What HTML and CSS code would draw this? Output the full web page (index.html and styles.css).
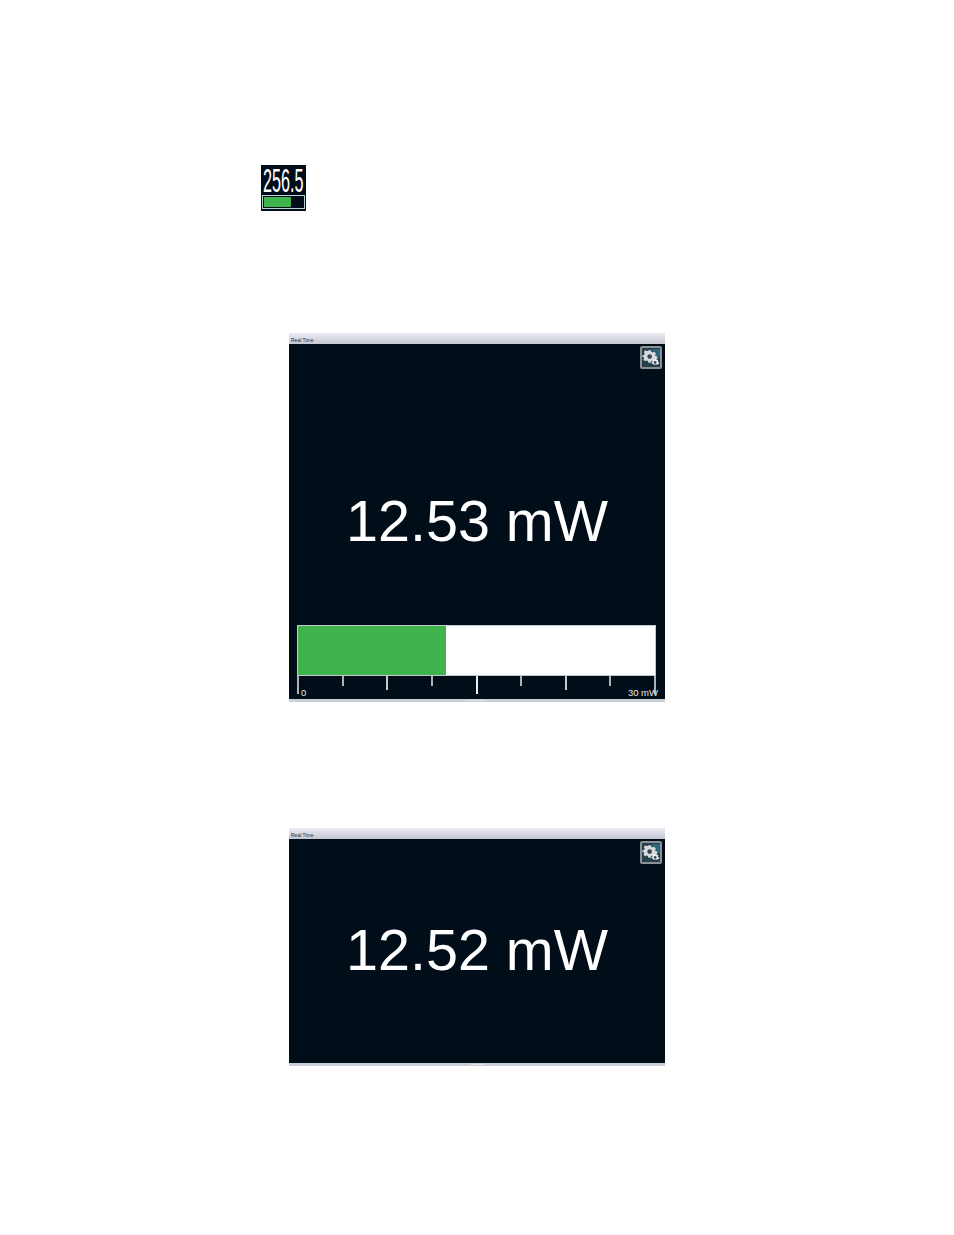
FILE: index.html
```html
<!DOCTYPE html>
<html lang="en">
<head>
    <meta charset="UTF-8">
    <meta name="viewport" content="width=device-width, initial-scale=1.0">
    <title>Real Time</title>
    <link rel="stylesheet" href="styles.css">
</head>
<body>
    <!-- Gear icon, used by both windows -->
    <svg class="icon-defs" width="0" height="0">
        <symbol id="gears" viewBox="0 0 20 19">
            <rect width="20" height="19" fill="#26404d"/>
            <rect x="11" y="0" width="9" height="10" fill="#2a6678"/>
            <path d="M7 1.5h3l.4 1.8 1.5.7 1.6-1 2 2-1 1.6.7 1.5 1.8.4v2.5l-1.8.4-.7 1.5-1.6.7-1.6-.7-1.4 1-.4 1.3H7l-.4-1.8-1.5-.7-1.6 1-2-2 1-1.6-.7-1.5L.5 9.5V7l1.8-.4.7-1.5-1-1.6 2-2 1.6 1 1.5-.7z" fill="#d8dbdd"/>
            <circle cx="8.5" cy="8.5" r="2.6" fill="#3a454d"/>
            <path d="M14.5 11l1.2.1.4 1 1.1-.3.9 1-.6 1 .5 1 1 .3v1.3l-1 .3-.4.6h-5.6l.3-.6-.8-.9-1 .3v-1.6l1-.3.5-1-.5-1 .9-.9 1 .4z" fill="#eceeef"/>
            <circle cx="14.6" cy="15" r="1.5" fill="#3a444b"/>
        </symbol>
    </svg>

    <!-- Small tile -->
    <div class="tile">
        <div class="tile-value"><span>256.5</span></div>
        <div class="tile-bar"><div class="tile-fill"></div></div>
    </div>

    <!-- Window with bar -->
    <div class="window window-bar">
        <div class="titlebar">Real Time</div>
        <div class="content">
            <button class="gear-btn"><svg width="18" height="19"><use href="#gears"/></svg></button>
            <div class="reading reading-top">12.53 mW</div>
            <div class="meter">
                <div class="meter-fill"></div>
            </div>
            <div class="scale">
                <span class="tick tick-long"></span>
                <span class="tick"></span>
                <span class="tick tick-mid"></span>
                <span class="tick"></span>
                <span class="tick tick-long tick-center"></span>
                <span class="tick"></span>
                <span class="tick tick-mid"></span>
                <span class="tick"></span>
                <span class="tick tick-long"></span>
                <span class="scale-min">0</span>
                <span class="scale-max">30 mW</span>
            </div>
        </div>
        <div class="bottombar"><span class="grip"></span></div>
    </div>

    <!-- Window without bar -->
    <div class="window window-plain">
        <div class="titlebar">Real Time</div>
        <div class="content">
            <button class="gear-btn"><svg width="18" height="19"><use href="#gears"/></svg></button>
            <div class="reading reading-plain">12.52 mW</div>
        </div>
        <div class="bottombar"><span class="grip"></span></div>
    </div>
</body>
</html>
```

FILE: styles.css
```css
body {
    font-family: "Liberation Sans", Arial, sans-serif;
    margin: 0;
    padding: 165px 0 0 0;
    background-color: #ffffff;
}
.icon-defs {
    display: block;
    height: 0;
}

/* Small tile */
.tile {
    width: 45px;
    height: 46px;
    margin-left: 261px;
    background-color: #020d1a;
    box-sizing: border-box;
    padding-top: 1px;
}
.tile-value {
    color: #ffffff;
    font-size: 33px;
    line-height: 29px;
    height: 29px;
    display: flex;
    justify-content: center;
    white-space: nowrap;
}
.tile-value span {
    display: block;
    flex: none;
    transform: scaleX(0.49);
}
.tile-bar {
    width: 43px;
    height: 14px;
    margin-left: 1px;
    box-sizing: border-box;
    border: 1px solid #b9d0da;
    padding: 1px;
    display: flex;
}
.tile-fill {
    width: 27px;
    background-color: #40b44c;
}

/* Windows */
.window {
    width: 376px;
    margin-left: 289px;
    display: flex;
    flex-direction: column;
}
.window-bar {
    height: 369px;
    margin-top: 122px;
}
.window-plain {
    height: 238px;
    margin-top: 126px;
}
.titlebar {
    height: 11px;
    flex: none;
    box-sizing: border-box;
    padding: 3px 0 0 2px;
    font-size: 5px;
    line-height: 8px;
    color: #2f3136;
    background: linear-gradient(#ebebf3, #c4c7d1);
}
.content {
    flex: 1;
    position: relative;
    background-color: #020d1a;
    display: flex;
    flex-direction: column;
}
.bottombar {
    height: 3px;
    flex: none;
    background-color: #c9d0da;
    display: flex;
    justify-content: center;
    align-items: center;
}
.grip {
    width: 15px;
    border-top: 1px dotted #f2f4f6;
}
.gear-btn {
    position: absolute;
    top: 2px;
    right: 3px;
    width: 22px;
    height: 23px;
    padding: 0;
    box-sizing: border-box;
    border: 2px solid #8b9094;
    border-radius: 2px;
    background-color: #26404d;
    overflow: hidden;
    display: flex;
    align-items: center;
    justify-content: center;
}
.reading {
    display: flex;
    align-items: center;
    justify-content: center;
    color: #ffffff;
    font-size: 57.5px;
}
.reading-top {
    height: 281px;
    box-sizing: border-box;
    padding-top: 72px;
}
.reading-plain {
    flex: 1;
    padding-bottom: 2px;
}

/* Meter */
.meter {
    width: 359px;
    height: 51px;
    margin-left: 8px;
    box-sizing: border-box;
    border: 1px solid #c4c8cc;
    background-color: #ffffff;
    display: flex;
}
.meter-fill {
    width: 148px;
    background-color: #40b44c;
}
.scale {
    position: relative;
    width: 359px;
    height: 20px;
    margin-left: 8px;
    display: flex;
    justify-content: space-between;
    align-items: flex-start;
}
.tick {
    width: 2px;
    height: 10px;
    background-color: #aeb2b5;
}
.tick-mid {
    height: 14px;
    background-color: #c6cacc;
}
.tick-long {
    height: 18px;
}
.tick-center {
    background-color: #eceeef;
}
.scale-min,
.scale-max {
    position: absolute;
    top: 11px;
    font-size: 9.5px;
    line-height: 11px;
    color: #e8e8e8;
}
.scale-min {
    left: 4px;
}
.scale-max {
    right: -2px;
}
```
